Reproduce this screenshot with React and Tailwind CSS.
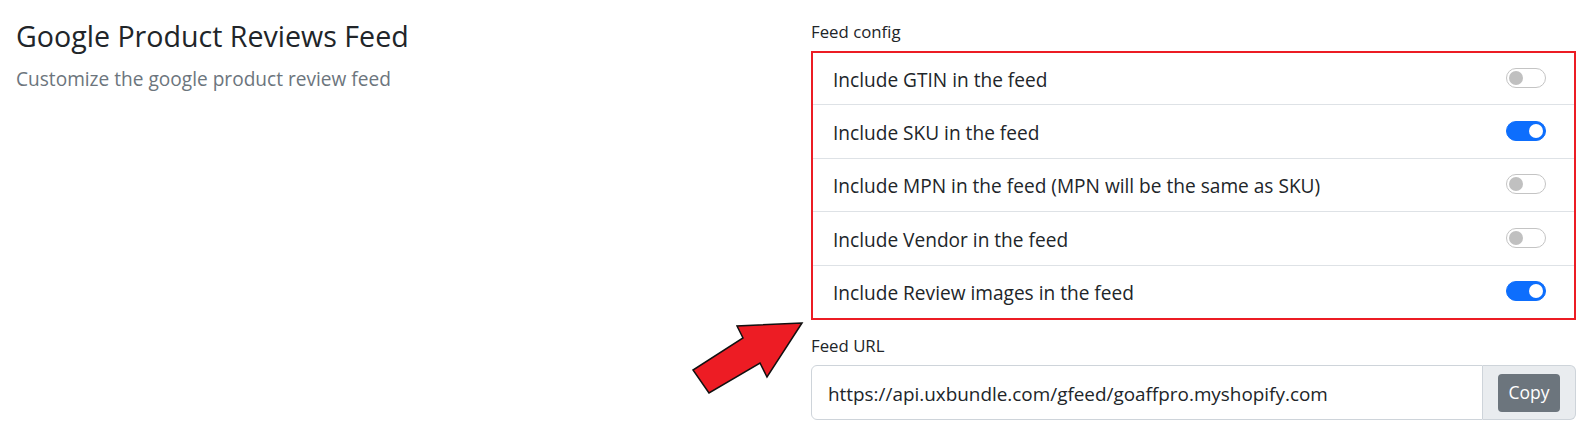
import { useState } from 'react';

const rows = [
  { label: 'Include GTIN in the feed', on: false, h: 'h-[51px]' },
  { label: 'Include SKU in the feed', on: true, h: 'h-[54px] border-t border-[#dee2e6]' },
  { label: 'Include MPN in the feed (MPN will be the same as SKU)', on: false, h: 'h-[53px] border-t border-[#dee2e6]' },
  { label: 'Include Vendor in the feed', on: false, h: 'h-[54px] border-t border-[#dee2e6]' },
  { label: 'Include Review images in the feed', on: true, h: 'h-[53px] border-t border-[#dee2e6]' },
];

const Toggle = ({ on, onClick }) => (
  <button
    onClick={onClick}
    className={`relative -mt-[2px] w-[40px] h-[20px] rounded-full border ${
      on ? 'bg-[#0d6efd] border-[#0d6efd]' : 'bg-white border-[#c4c4c4]'
    }`}
  >
    <span
      className={`absolute top-[2px] w-[14px] h-[14px] rounded-full ${
        on ? 'right-[2px] bg-white' : 'left-[2px] bg-[#c0c0c0]'
      }`}
    />
  </button>
);

const App = () => {
  const [config, setConfig] = useState(rows);

  const flip = (i) =>
    setConfig((c) => c.map((r, j) => (j === i ? { ...r, on: !r.on } : r)));

  return (
    <div
      className="relative min-h-[445px] bg-white text-[#212529] pl-4 pr-[10px] pt-[18px]"
      style={{ fontFamily: '"Open Sans", "Noto Sans", sans-serif' }}
    >
      <div className="grid grid-cols-2 gap-[30px]">
        {/* Left: heading */}
        <div>
          <h1 className="mt-[1px] text-[28.6px] leading-[1.2] font-normal">Google Product Reviews Feed</h1>
          <p className="mt-[12px] text-[19.1px] leading-[1.5] text-[#6c757d]">
            Customize the google product review feed
          </p>
        </div>

        {/* Right: config */}
        <div>
          <div className="text-[16.8px] leading-[24px] mt-[2px] mb-[7px]">Feed config</div>
          <div className="border-2 border-[#ec1c24]">
            {config.map((row, i) => (
              <div
                key={row.label}
                className={`flex items-center justify-between pl-[20px] pr-[28px] ${row.h}`}
              >
                <span className="pt-[3px] text-[19.1px]">{row.label}</span>
                <Toggle on={row.on} onClick={() => flip(i)} />
              </div>
            ))}
          </div>

          <div className="text-[16.8px] leading-[24px] mt-[14px] mb-[7px]">Feed URL</div>
          <div className="flex h-[55px]">
            <div className="flex-1 flex items-center pl-[16px] pt-[3px] border border-[#ced4da] rounded-l-[6px] text-[18.9px]">
              https://api.uxbundle.com/gfeed/goaffpro.myshopify.com
            </div>
            <div className="w-[93px] flex items-center justify-center bg-[#e9ecef] border border-l-0 border-[#ced4da] rounded-r-[6px]">
              <button className="w-[62px] h-[38px] rounded-[4px] bg-[#6c757d] text-white text-[17.5px]">
                Copy
              </button>
            </div>
          </div>
        </div>
      </div>

      {/* annotation arrow */}
      <svg
        className="absolute left-[686px] top-[318px] pointer-events-none"
        width="122"
        height="80"
        viewBox="686 318 122 80"
      >
        <polygon
          points="802,323 737,326 743,338 693,370 709,393 760,363 767,377"
          fill="#ed1c24"
          stroke="#111"
          strokeWidth="1.5"
          strokeLinejoin="miter"
        />
      </svg>
    </div>
  );
};

export default App;
